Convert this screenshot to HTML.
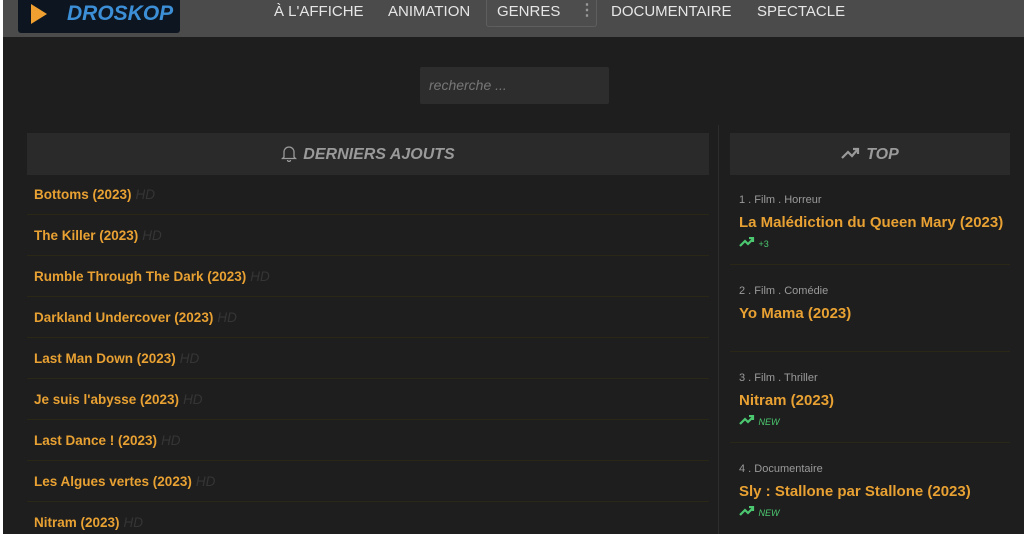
<!DOCTYPE html>
<html style="overflow:hidden"><head><meta charset="utf-8"><style>
*{margin:0;padding:0;box-sizing:border-box}
html,body{width:1024px;height:534px;overflow:hidden}
body{background:#fff;font-family:"Liberation Sans",sans-serif;position:relative}
.main{position:absolute;left:3px;top:0;right:0;bottom:0;background:#1e1e1e}
.hdr{position:absolute;left:3px;top:0;width:1021px;height:37px;background:#4b4b4b}
.logo{position:absolute;left:15px;top:0;width:162px;height:33px;background:#0d1620;border-radius:0 0 3px 3px}
.logo .tri{position:absolute;left:13px;top:4px;width:0;height:0;border-left:16px solid #f0a030;border-top:10px solid transparent;border-bottom:10px solid transparent}
.logo span{position:absolute;left:49px;top:2px;color:#3c8fd6;font-weight:bold;font-style:italic;font-size:21px}
.nav{position:absolute;top:3px;color:#e6e6e6;font-size:15px}
.gen{position:absolute;left:483px;top:-3px;width:111px;height:30px;border:1px solid #5e5e5e;border-radius:3px;background:#4d4d4d}
.search{position:absolute;left:420px;top:67px;width:189px;height:37px;background:#2d2d2d;border-radius:2px;color:#777;font-style:italic;font-size:14px;padding:10px 9px}
.ph{position:absolute;top:133px;height:42px;background:#2a2a2a;color:#9a9a9a;font-weight:bold;font-style:italic;font-size:16px;text-align:center;line-height:44px}
.row{position:absolute;left:27px;width:682px;height:41px;border-bottom:1px solid #2a2716;color:#e8a132;font-weight:bold;font-size:13.5px;padding-left:7px;line-height:41px}
.row i{color:#353535;font-weight:normal;margin-left:4px}
.vd{position:absolute;left:718px;top:125px;width:1px;height:409px;background:#2c2c2c}
.it{position:absolute;left:730px;width:280px;border-bottom:1px solid #2a2716;padding-left:9px;padding-top:3px}
.meta{color:#9a9a9a;font-size:11px}
.tt{color:#e8a132;font-weight:bold;font-size:15px;margin-top:8px}
.tr{color:#4cc870;font-size:9px;margin-top:6px;font-style:italic}
</style></head><body>
<div class="main"></div>
<div class="hdr">
 <div class="logo"><div class="tri"></div><span>DROSKOP</span></div>
 <div class="gen"></div>
 <div class="nav" style="left:271px">À L'AFFICHE</div>
 <div class="nav" style="left:385px">ANIMATION</div>
 <div class="nav" style="left:494px">GENRES</div>
 <div class="nav" style="left:576px;top:0;color:#999;font-size:16px;font-weight:bold">⋮</div>
 <div class="nav" style="left:608px">DOCUMENTAIRE</div>
 <div class="nav" style="left:754px">SPECTACLE</div>
</div>
<div class="search">recherche ...</div>
<div class="ph" style="left:27px;width:682px"><svg width="16" height="18" viewBox="0 0 16 18" style="vertical-align:-3px;margin-right:6px"><path d="M3 13V8a5 5 0 0 1 10 0v5l1.5 1.5h-13z M6.5 16a1.5 1.5 0 0 0 3 0" fill="none" stroke="#9a9a9a" stroke-width="1.3"/></svg>DERNIERS AJOUTS</div>
<div class="ph" style="left:730px;width:280px"><svg width="20" height="14" viewBox="0 0 20 14" style="vertical-align:-1px;margin-right:5px"><path d="M1 12l6-6 4 4 6-7 M12 3h5v5" fill="none" stroke="#9a9a9a" stroke-width="2.2"/></svg>TOP</div>
<div class="row" style="top:174px">Bottoms (2023)<i>HD</i></div>
<div class="row" style="top:215px">The Killer (2023)<i>HD</i></div>
<div class="row" style="top:256px">Rumble Through The Dark (2023)<i>HD</i></div>
<div class="row" style="top:297px">Darkland Undercover (2023)<i>HD</i></div>
<div class="row" style="top:338px">Last Man Down (2023)<i>HD</i></div>
<div class="row" style="top:379px">Je suis l'abysse (2023)<i>HD</i></div>
<div class="row" style="top:420px">Last Dance ! (2023)<i>HD</i></div>
<div class="row" style="top:461px">Les Algues vertes (2023)<i>HD</i></div>
<div class="row" style="top:502px;height:32px;border:none">Nitram (2023)<i>HD</i></div>
<div class="vd"></div>
<div class="it" style="top:191px;height:74px"><div class="meta">1 . Film . Horreur</div><div class="tt">La Malédiction du Queen Mary (2023)</div><div class="tr" style="font-style:normal"><svg width="17" height="10" viewBox="0 0 17 10"><path d="M1 9l5-5 3 3 5-5 M10 1h4v4" fill="none" stroke="#4cc870" stroke-width="2.2"/></svg> +3</div></div>
<div class="it" style="top:282px;height:70px"><div class="meta">2 . Film . Comédie</div><div class="tt">Yo Mama (2023)</div></div>
<div class="it" style="top:369px;height:74px"><div class="meta">3 . Film . Thriller</div><div class="tt">Nitram (2023)</div><div class="tr"><svg width="17" height="10" viewBox="0 0 17 10"><path d="M1 9l5-5 3 3 5-5 M10 1h4v4" fill="none" stroke="#4cc870" stroke-width="2.2"/></svg> NEW</div></div>
<div class="it" style="top:460px;height:74px;border:none"><div class="meta">4 . Documentaire</div><div class="tt">Sly : Stallone par Stallone (2023)</div><div class="tr"><svg width="17" height="10" viewBox="0 0 17 10"><path d="M1 9l5-5 3 3 5-5 M10 1h4v4" fill="none" stroke="#4cc870" stroke-width="2.2"/></svg> NEW</div></div>
</body></html>
